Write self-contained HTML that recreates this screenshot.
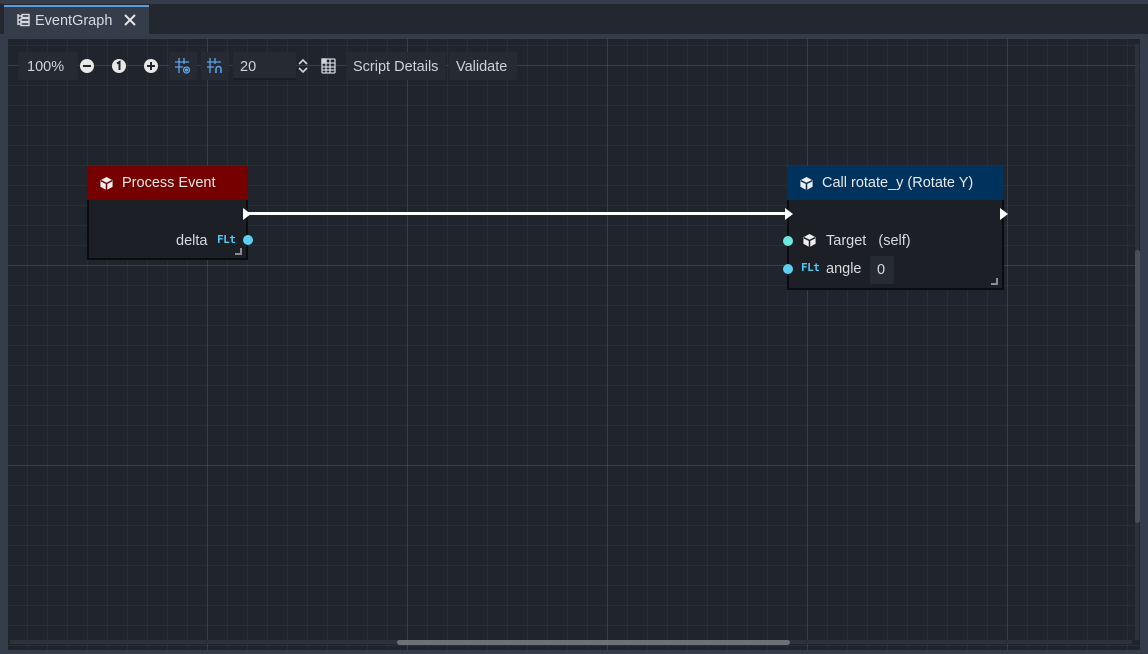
<!DOCTYPE html>
<html><head><meta charset="utf-8"><style>
*{margin:0;padding:0;box-sizing:border-box}
body{width:1148px;height:654px;background:#363d4a;font-family:"Liberation Sans",sans-serif;color:#d8dbe0;font-size:14.5px;position:relative;overflow:hidden}
.tabbar{position:absolute;left:0;top:4px;width:1148px;height:30px;background:#232730}
.tab{position:absolute;left:4px;top:1px;width:145px;height:29px;background:#363d4a;border-top:2px solid #5c9bd6}
.tab span{position:absolute;left:31px;top:6px;font-size:14.5px;color:#d8dbe0}
.graph{position:absolute;left:8px;top:39px;width:1132px;height:611px;background-color:#20242c;
background-image:
linear-gradient(to right,rgba(255,255,255,0.08) 1px,transparent 1px),
linear-gradient(to bottom,rgba(255,255,255,0.08) 1px,transparent 1px),
linear-gradient(to right,rgba(255,255,255,0.04) 1px,transparent 1px),
linear-gradient(to bottom,rgba(255,255,255,0.04) 1px,transparent 1px);
background-size:200px 200px,200px 200px,20px 20px,20px 20px;
background-position:-1px 26px,-1px 26px,-1px 6px,-1px 6px;overflow:hidden}
.tb{position:absolute;top:52px;height:28px;background:#262a33;border-radius:2px}
.t{position:absolute;top:59px;font-size:14.5px;color:#d0d3d8}
.node{position:absolute;background:#1c1f26;border:2px solid #0b0c0e;border-top:none}
.hd{position:absolute;left:0;top:0;right:0;height:34px;color:#e8e8e8;font-size:14.5px}
.hd span{position:absolute;left:35px;top:9px}
.pin{position:absolute;width:10px;height:10px;border-radius:50%}
.flt{position:absolute;font-size:11px;font-weight:bold;color:#4fc8ef;font-family:"DejaVu Sans Mono",monospace;letter-spacing:-0.5px}
.corner{position:absolute;width:7px;height:7px;border-right:2px solid #8a8d92;border-bottom:2px solid #8a8d92}
</style></head><body>
<div class="tabbar"><div class="tab">
<svg style="position:absolute;left:12px;top:6px" width="14" height="14" viewBox="0 0 14 14" fill="none" stroke="#d8dbe0" stroke-width="1.4"><path d="M2 1v11M2 3h4M2 7h3M2 11h3"/><rect x="6" y="1.5" width="7" height="3"/><rect x="5" y="5.5" width="8" height="3"/><rect x="5" y="9.5" width="8" height="3"/></svg>
<span>EventGraph</span>
<svg style="position:absolute;left:120px;top:7px" width="12" height="12" viewBox="0 0 12 12" stroke="#e8e8e8" stroke-width="2"><path d="M1 1L11 11M11 1L1 11"/></svg>
</div></div>
<div class="graph"></div>
<div class="tb" style="left:18px;width:60px"></div>
<div class="t" style="left:27px">100%</div>
<svg style="position:absolute;left:79px;top:58px" width="16" height="16"><circle cx="8" cy="8" r="7" fill="#e8e8e8"/><rect x="4" y="7" width="8" height="2" fill="#20242c"/></svg>
<svg style="position:absolute;left:111px;top:58px" width="16" height="16"><circle cx="8" cy="8" r="7" fill="#e8e8e8"/><path d="M6 5.5l2.5-1.5V12" stroke="#20242c" stroke-width="2" fill="none"/></svg>
<svg style="position:absolute;left:143px;top:58px" width="16" height="16"><circle cx="8" cy="8" r="7" fill="#e8e8e8"/><path d="M4 8h8M8 4v8" stroke="#20242c" stroke-width="2"/></svg>
<div class="tb" style="left:169px;width:28px"></div>
<svg style="position:absolute;left:174px;top:57px" width="18" height="18" fill="none" stroke="#5ca4e8" stroke-width="1.3"><path d="M1 5h14M1 10h8M5 1v15M10 1v6"/><circle cx="12.5" cy="13" r="3"/><circle cx="12.5" cy="13" r="1" fill="#5ca4e8"/></svg>
<div class="tb" style="left:201px;width:28px"></div>
<svg style="position:absolute;left:206px;top:57px" width="18" height="18" fill="none" stroke="#5ca4e8" stroke-width="1.3"><path d="M1 5h14M1 10h7M4 1v15M9 1v6"/><path d="M10 16v-4a2.5 2.5 0 0 1 5 0v4" stroke-width="1.6"/></svg>
<div style="position:absolute;left:233px;top:52px;width:63px;height:28px;background:#262a33;border-bottom:2px solid #1a1d22"></div>
<div class="t" style="left:240px">20</div>
<svg style="position:absolute;left:297px;top:57px" width="12" height="18" fill="none" stroke="#d0d3d8" stroke-width="1.6"><path d="M2 7l4-4 4 4M2 11l4 4 4-4"/></svg>
<svg style="position:absolute;left:320px;top:57px" width="18" height="18" fill="none" stroke="#d0d3d8" stroke-width="1.3"><rect x="2" y="2" width="13" height="14" rx="1"/><path d="M2 6h13M2 10h13M2 13h13M6 2v14M10 2v14"/><rect x="2" y="2" width="4" height="4" fill="#d0d3d8"/></svg>
<div class="tb" style="left:346px;width:100px"></div>
<div class="t" style="left:353px">Script Details</div>
<div class="tb" style="left:449px;width:68px"></div>
<div class="t" style="left:456px">Validate</div>
<div style="position:absolute;left:247px;top:212px;width:540px;height:3px;background:#fff"></div>
<div class="node" style="left:87px;top:166px;width:161px;height:94px">
<div class="hd" style="background:#740000;left:-2px;right:-2px"><svg style="position:absolute;left:12px;top:10px" width="15" height="15" viewBox="0 0 16 16"><path d="M8 1l6.5 3.5v7L8 15 1.5 11.5v-7z" fill="#eee"/><path d="M8 8l6-3M8 8L2 5M8 8v7" stroke="#740000" stroke-width="1.6" fill="none"/></svg><span>Process Event</span></div>
<svg style="position:absolute;left:154px;top:42px" width="10" height="12"><path d="M0 0l8 6-8 6z" fill="#fff"/></svg>
<div style="position:absolute;left:87px;top:67px">delta</div>
<div class="flt" style="left:128px;top:67px">FLt</div>
<div class="pin" style="left:154px;top:69px;background:#5ccff2"></div>
<div class="corner" style="left:146px;top:82px"></div>
</div>
<div class="node" style="left:787px;top:166px;width:217px;height:124px">
<div class="hd" style="background:#00325e;left:-2px;right:-2px"><svg style="position:absolute;left:12px;top:10px" width="15" height="15" viewBox="0 0 16 16"><path d="M8 1l6.5 3.5v7L8 15 1.5 11.5v-7z" fill="#eee"/><path d="M8 8l6-3M8 8L2 5M8 8v7" stroke="#00325e" stroke-width="1.6" fill="none"/></svg><span>Call rotate_y (Rotate Y)</span></div>
<svg style="position:absolute;left:-4px;top:42px" width="10" height="12"><path d="M0 0l8 6-8 6z" fill="#fff"/></svg>
<svg style="position:absolute;left:211px;top:42px" width="10" height="12"><path d="M0 0l8 6-8 6z" fill="#fff"/></svg>
<div class="pin" style="left:-6px;top:70px;background:#6de8e0"></div>
<svg style="position:absolute;left:13px;top:67px" width="15" height="15" viewBox="0 0 16 16"><path d="M8 1l6.5 3.5v7L8 15 1.5 11.5v-7z" fill="#eee"/><path d="M8 8l6-3M8 8L2 5M8 8v7" stroke="#1c1f26" stroke-width="1.6" fill="none"/></svg>
<div style="position:absolute;left:37px;top:67px">Target&nbsp;&nbsp;&nbsp;(self)</div>
<div class="pin" style="left:-6px;top:98px;background:#5ccff2"></div>
<div class="flt" style="left:12px;top:95px">FLt</div>
<div style="position:absolute;left:37px;top:95px">angle</div>
<div style="position:absolute;left:81px;top:90px;width:24px;height:28px;background:#262a31;border-radius:2px;padding:6px 0 0 7px">0</div>
<div class="corner" style="left:202px;top:112px"></div>
</div>
<div style="position:absolute;left:10px;top:640px;width:1122px;height:4px;background:#2d3139"></div>
<div style="position:absolute;left:397px;top:640px;width:393px;height:5px;border-radius:3px;background:#6c7077"></div>
<div style="position:absolute;left:1135px;top:44px;width:4px;height:596px;background:#2d3139"></div>
<div style="position:absolute;left:1135px;top:250px;width:5px;height:273px;border-radius:3px;background:#4a4f57"></div>
</body></html>
